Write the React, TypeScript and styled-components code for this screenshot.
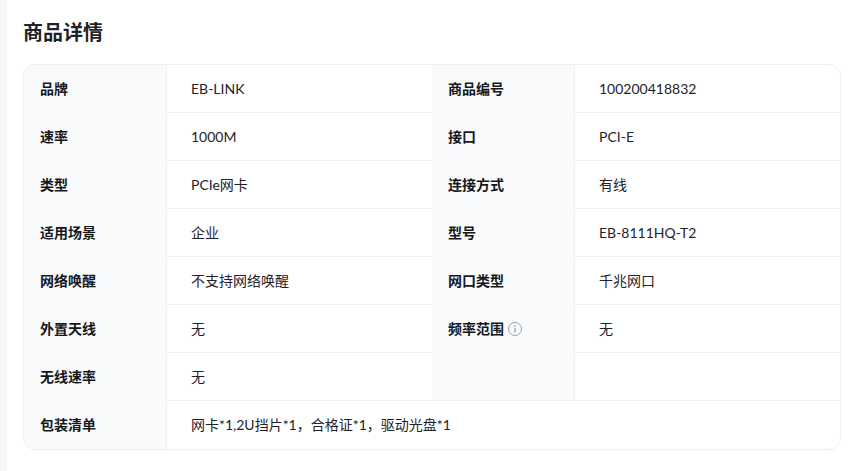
import React from 'react'
import styled, { createGlobalStyle } from 'styled-components'

const GlobalStyle = createGlobalStyle`
  html, body {
    margin: 0;
    padding: 0;
    background: #fff;
    font-family: Lato, "Noto Sans CJK SC", sans-serif;
  }
`

type Attr = { label: string; value: string; hint?: boolean; underline?: boolean }

const attrs: Attr[] = [
  { label: '品牌', value: 'EB-LINK' },
  { label: '商品编号', value: '100200418832' },
  { label: '速率', value: '1000M' },
  { label: '接口', value: 'PCI-E' },
  { label: '类型', value: 'PCIe网卡' },
  { label: '连接方式', value: '有线' },
  { label: '适用场景', value: '企业' },
  { label: '型号', value: 'EB-8111HQ-T2' },
  { label: '网络唤醒', value: '不支持网络唤醒' },
  { label: '网口类型', value: '千兆网口' },
  { label: '外置天线', value: '无' },
  { label: '频率范围', value: '无', hint: true },
  { label: '无线速率', value: '无' },
  { label: '', value: '', underline: true },
]

const InfoIcon = () => (
  <svg width="14" height="14" viewBox="0 0 14 14" fill="none">
    <circle cx="7" cy="7" r="6.5" stroke="#999ea5" strokeWidth="1" />
    <rect x="6.25" y="5.8" width="1.5" height="4.7" fill="#a6aab0" />
    <rect x="6.25" y="3.4" width="1.5" height="1.5" fill="#a6aab0" />
  </svg>
)

export default function App() {
  return (
    <>
      <GlobalStyle />
      <Page>
        <Title>商品详情</Title>
        <Table>
          {attrs.map((a, i) => (
            <React.Fragment key={i}>
              <Label $underline={a.underline}>
                {a.label}
                {a.hint && <InfoIcon />}
              </Label>
              <Value>{a.value}</Value>
            </React.Fragment>
          ))}
          <Label>包装清单</Label>
          <Value $last $wide>网卡*1,2U挡片*1，合格证*1，驱动光盘*1</Value>
        </Table>
      </Page>
    </>
  )
}

const Page = styled.div`
  width: 857px;
  height: 471px;
  box-sizing: border-box;
  background: #fff;
  border-left: 7px solid #f5f6fa;
  padding: 17px 16px 0;
  overflow: hidden;
`

const Title = styled.h2`
  margin: 0 0 17px;
  font-size: 20px;
  line-height: 30px;
  font-weight: 700;
  color: #1f2329;
`

const Table = styled.div`
  display: grid;
  grid-template-columns: 143px 265px 143px 265px;
  grid-auto-rows: 48px;
  border: 1px solid #eeeff1;
  border-radius: 12px;
  overflow: hidden;
`

const Label = styled.div<{ $underline?: boolean }>`
  display: flex;
  align-items: center;
  gap: 4px;
  padding-left: 16px;
  background: #f9fafc;
  border-right: 1px solid #eeeff1;
  font-size: 14px;
  line-height: 22px;
  font-weight: 600;
  color: #14171c;
  ${p => (p.$underline ? 'border-bottom: 1px solid #eeeff1;' : '')}
`

const Value = styled.div<{ $last?: boolean; $wide?: boolean }>`
  display: flex;
  align-items: center;
  padding-left: 24px;
  font-size: 14px;
  line-height: 22px;
  color: #1f2329;
  ${p => (p.$last ? '' : 'border-bottom: 1px solid #eeeff1;')}
  ${p => (p.$wide ? 'grid-column: span 3;' : '')}
`
